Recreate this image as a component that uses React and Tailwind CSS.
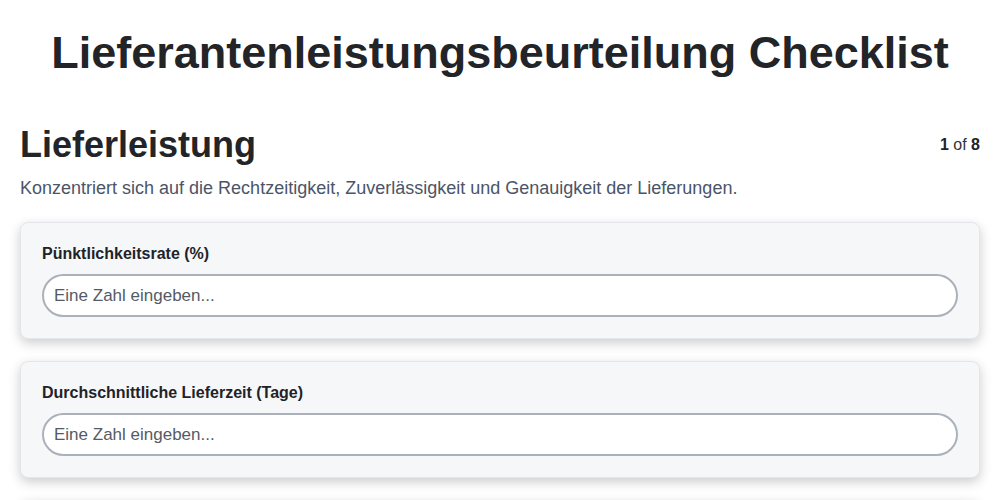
import React from 'react';

const fields = [
    { label: 'Pünktlichkeitsrate (%)' },
    { label: 'Durchschnittliche Lieferzeit (Tage)' },
    { label: 'Lieferungen ohne Beanstandung (%)' },
];

function FieldCard({ label }) {
    return (
        <div className="bg-[#f6f7f9] border border-[#e3e6ea] rounded-lg px-[21px] pt-[21px] pb-[21px] shadow-[0_4px_12px_rgba(0,0,0,0.2)] mb-[22px]">
            <label className="block text-base leading-5 font-bold text-[#1f2328] mb-[10px]">{label}</label>
            <input
                type="number"
                placeholder="Eine Zahl eingeben..."
                className="w-full h-[43px] rounded-full border-2 border-[#aab1ba] bg-white px-[10px] text-[17px] text-[#333] placeholder:text-[#555b66] outline-none"
            />
        </div>
    );
}

export default function App() {
    return (
        <div className="min-h-screen bg-white font-['Liberation_Sans',Arial,sans-serif]">
            <h1 className="pt-[30px] text-center text-[45px] leading-none font-bold text-[#222428]">
                Lieferantenleistungsbeurteilung Checklist
            </h1>

            <div className="px-5 pt-[50px]">
                <div className="flex items-center justify-between">
                    <h2 className="text-4xl leading-10 font-bold text-[#222428]">Lieferleistung</h2>
                    <div className="text-base text-[#333]">
                        <span className="font-bold text-[#1f2328]">1</span> of <span className="font-bold text-[#1f2328]">8</span>
                    </div>
                </div>
                <p className="mt-[9px] mb-5 text-lg leading-7 text-[#4a5568]">
                    Konzentriert sich auf die Rechtzeitigkeit, Zuverlässigkeit und Genauigkeit der Lieferungen.
                </p>

                {fields.map((f) => (
                    <FieldCard key={f.label} label={f.label} />
                ))}
            </div>
        </div>
    );
}
